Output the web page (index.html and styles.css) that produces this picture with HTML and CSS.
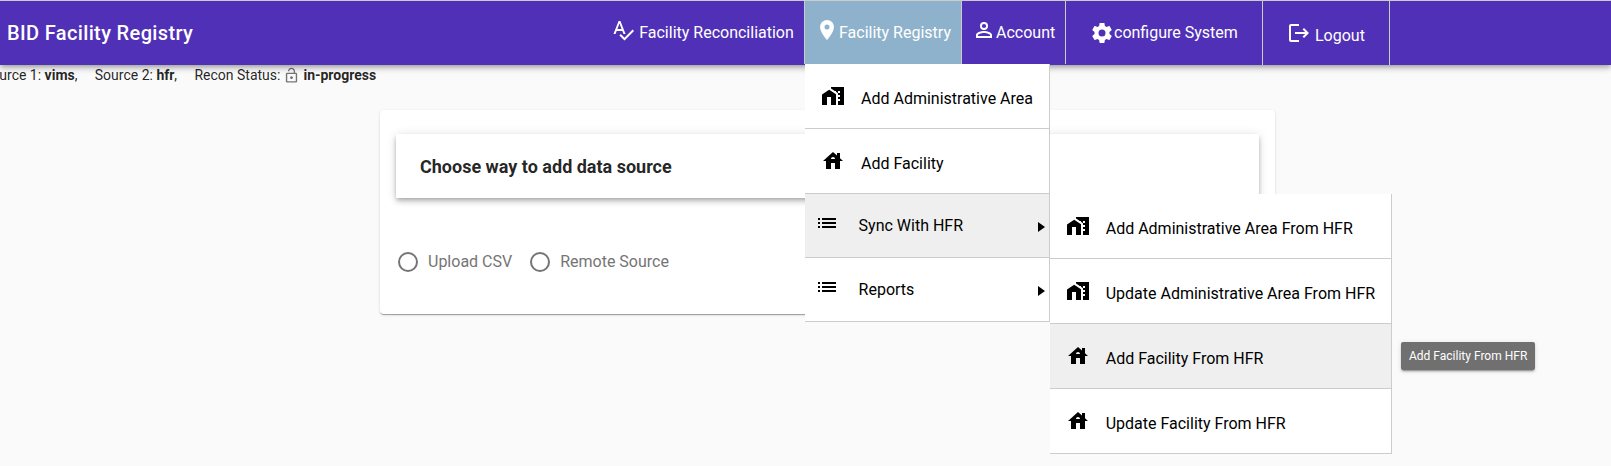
FILE: index.html
```html
<!DOCTYPE html>
<html lang="en">
<head>
<meta charset="utf-8">
<title>BID Facility Registry</title>
<link rel="stylesheet" href="styles.css">
</head>
<body>
<svg class="defs" aria-hidden="true">
  <symbol id="spellcheck" viewBox="0 0 24 24"><path d="M21.59,11.59L13.5,19.68L9.83,16L8.42,17.41L13.5,22.5L23,13M6.43,11L8.5,5.5L10.57,11M12.45,16H14.54L9.43,3H7.57L2.46,16H4.55L5.67,13H11.31L12.45,16Z"/></symbol>
  <symbol id="marker" viewBox="0 0 24 24"><path d="M12,11.5A2.5,2.5 0 0,1 9.5,9A2.5,2.5 0 0,1 12,6.5A2.5,2.5 0 0,1 14.5,9A2.5,2.5 0 0,1 12,11.5M12,2A7,7 0 0,0 5,9C5,14.25 12,22 12,22C12,22 19,14.25 19,9A7,7 0 0,0 12,2Z"/></symbol>
  <symbol id="account" viewBox="0 0 24 24"><path d="M12,4A4,4 0 0,1 16,8A4,4 0 0,1 12,12A4,4 0 0,1 8,8A4,4 0 0,1 12,4M12,5.9A2.1,2.1 0 0,0 9.9,8A2.1,2.1 0 0,0 12,10.1A2.1,2.1 0 0,0 14.1,8A2.1,2.1 0 0,0 12,5.9M12,13C14.67,13 20,14.33 20,17V20H4V17C4,14.33 9.33,13 12,13M12,14.9C9.03,14.9 5.9,16.36 5.9,17V18.1H18.1V17C18.1,16.36 14.97,14.9 12,14.9Z"/></symbol>
  <symbol id="cog" viewBox="0 0 24 24"><path d="M12,15.5A3.5,3.5 0 0,1 8.5,12A3.5,3.5 0 0,1 12,8.5A3.5,3.5 0 0,1 15.5,12A3.5,3.5 0 0,1 12,15.5M19.43,12.97C19.47,12.65 19.5,12.33 19.5,12C19.5,11.67 19.47,11.34 19.43,11L21.54,9.37C21.73,9.22 21.78,8.95 21.66,8.73L19.66,5.27C19.54,5.05 19.27,4.96 19.05,5.05L16.56,6.05C16.04,5.66 15.5,5.32 14.87,5.07L14.5,2.42C14.46,2.18 14.25,2 14,2H10C9.75,2 9.54,2.18 9.5,2.42L9.13,5.07C8.5,5.32 7.96,5.66 7.44,6.05L4.95,5.05C4.73,4.96 4.46,5.05 4.34,5.27L2.34,8.73C2.21,8.95 2.27,9.22 2.46,9.37L4.57,11C4.53,11.34 4.5,11.67 4.5,12C4.5,12.33 4.53,12.65 4.57,12.97L2.46,14.63C2.27,14.78 2.21,15.05 2.34,15.27L4.34,18.73C4.46,18.95 4.73,19.03 4.95,18.95L7.44,17.94C7.96,18.34 8.5,18.68 9.13,18.93L9.5,21.58C9.54,21.82 9.75,22 10,22H14C14.25,22 14.46,21.82 14.5,21.58L14.87,18.93C15.5,18.67 16.04,18.34 16.56,17.94L19.05,18.95C19.27,19.03 19.54,18.95 19.66,18.73L21.66,15.27C21.78,15.05 21.73,14.78 21.54,14.63L19.43,12.97Z"/></symbol>
  <symbol id="logout" viewBox="0 0 24 24"><path d="M17 7L15.59 8.41 18.17 11H8V13H18.17L15.59 15.58 17 17L22 12M4 5H12V3H4C2.9 3 2 3.9 2 5V19C2 20.1 2.9 21 4 21H12V19H4V5Z"/></symbol>
  <symbol id="area" viewBox="0 0 24 24"><path d="M8.17 5.7L1 10.48V21h5v-8h4v8h5V10.25z"/><path d="M10 3v1.51l2 1.33L13.73 7H15v.85l2 1.34V11h2v2h-2v2h2v2h-2v4h6V3H10zm9 6h-2V7h2v2z"/></symbol>
  <symbol id="house" viewBox="0 0 24 24"><path d="M19 9.3V4h-3v2.6L12 3 2 12h3v8h5v-6h4v6h5v-8h3l-3-2.7zm-9 .7c0-1.1.9-2 2-2s2 .9 2 2h-4z"/></symbol>
  <symbol id="list" viewBox="0 0 24 24"><path d="M3 13h2v-2H3v2zm0 4h2v-2H3v2zm0-8h2V7H3v2zm4 4h14v-2H7v2zm0 4h14v-2H7v2zM7 7v2h14V7H7z"/></symbol>
  <symbol id="lock" viewBox="0 0 24 24"><path d="M12 17c1.1 0 2-.9 2-2s-.9-2-2-2-2 .9-2 2 .9 2 2 2zm6-9h-1V6c0-2.76-2.240-5-5-5S7 3.240 7 6h1.900c0-1.710 1.390-3.100 3.100-3.100s3.100 1.390 3.100 3.100v2H6c-1.100 0-2 .9-2 2v10c0 1.100.9 2 2 2h12c1.100 0 2-.9 2-2V10c0-1.100-.9-2-2-2zm0 12H6V10h12v10z"/></symbol>
</svg>

<header class="toolbar">
  <h1 class="brand">BID Facility Registry</h1>
  <nav class="nav">
    <a class="nav-item reconciliation"><svg class="icon"><use href="#spellcheck"/></svg><span>Facility Reconciliation</span></a>
    <div class="nav-item registry">
      <svg class="icon"><use href="#marker"/></svg><span>Facility Registry</span>
      <div class="menu">
        <a class="menu-item"><svg class="icon"><use href="#area"/></svg><span>Add Administrative Area</span></a>
        <a class="menu-item"><svg class="icon"><use href="#house"/></svg><span>Add Facility</span></a>
        <div class="menu-item parent hovered">
          <svg class="icon"><use href="#list"/></svg><span>Sync With HFR</span><i class="arrow"></i>
          <div class="submenu">
            <a class="menu-item"><svg class="icon"><use href="#area"/></svg><span>Add Administrative Area From HFR</span></a>
            <a class="menu-item"><svg class="icon"><use href="#area"/></svg><span>Update Administrative Area From HFR</span></a>
            <a class="menu-item hovered"><svg class="icon"><use href="#house"/></svg><span>Add Facility From HFR</span><b class="tooltip">Add Facility From HFR</b></a>
            <a class="menu-item"><svg class="icon"><use href="#house"/></svg><span>Update Facility From HFR</span></a>
          </div>
        </div>
        <div class="menu-item parent"><svg class="icon"><use href="#list"/></svg><span>Reports</span><i class="arrow"></i></div>
      </div>
    </div>
    <a class="nav-item account"><svg class="icon"><use href="#account"/></svg><span>Account</span></a>
    <a class="nav-item configure"><svg class="icon"><use href="#cog"/></svg><span>configure System</span></a>
    <a class="nav-item logout"><svg class="icon"><use href="#logout"/></svg><span>Logout</span></a>
  </nav>
</header>

<div class="status">
  <span>Source 1: <b>vims</b>,</span>
  <span>Source 2: <b>hfr</b>,</span>
  <span class="recon">Recon Status: <svg class="lock"><use href="#lock"/></svg> <b>in-progress</b></span>
</div>

<main class="card">
  <h2 class="card-title">Choose way to add data source</h2>
  <div class="radios">
    <label class="radio"><i class="circle"></i>Upload CSV</label>
    <label class="radio"><i class="circle"></i>Remote Source</label>
  </div>
</main>
</body>
</html>
```
FILE: styles.css
```css
* { box-sizing: border-box; }

body {
  margin: 0;
  height: 466px;
  overflow: hidden;
  background: #fafafa;
  color: rgba(0, 0, 0, .87);
  font: 16px/24px Roboto, sans-serif;
}

.defs { display: none; }
.icon { flex: none; width: 24px; height: 24px; fill: currentColor; }

/* Toolbar */
.toolbar {
  position: relative;
  z-index: 2;
  display: flex;
  height: 65px;
  border-top: 1px solid #ccc;
  background: #5030b6;
  color: #fff;
  box-shadow: 0 2px 4px -1px rgba(0, 0, 0, .2), 0 4px 5px rgba(0, 0, 0, .14), 0 1px 10px rgba(0, 0, 0, .12);
}
.brand {
  width: 598px;
  margin: 0;
  padding: 16px 0 0 7px;
  font-size: 20px;
  font-weight: 500;
  line-height: 32px;
  letter-spacing: .36px;
}
.nav { display: flex; align-items: flex-start; }
.nav-item {
  position: relative;
  display: flex;
  height: 63px;
  border-right: 1px solid #ccc;
  padding-top: 17px;
  white-space: nowrap;
}
.nav-item > span { padding-top: 3px; }
.reconciliation { width: 207px; padding-left: 13.4px; }
.reconciliation > span { padding-left: 3.8px; }
.registry { width: 157px; padding-left: 10px; background: #8eb2cb; }
.account { width: 104px; padding-left: 10px; }
.configure { width: 197px; height: 64px; padding: 20px 0 0 24px; }
.configure > span { padding-top: 0; }
.logout { width: 127px; height: 64px; padding: 20px 0 0 24px; }
.logout > span { padding-left: 4px; }

/* Dropdown menus */
.menu, .submenu {
  position: absolute;
  border-right: 1px solid #ccc;
  background: #fff;
  color: #000;
}
.menu { top: 63px; left: 0; width: 245px; }
.submenu { top: 0; left: 245px; width: 342px; }
.menu-item {
  position: relative;
  display: flex;
  height: 65px;
  padding: 20px 0 0 16px;
  border-bottom: 1px solid #ccc;
  background: #fff;
}
.menu-item > span { padding: 3px 0 0 16px; }
.parent { height: 64px; padding: 17px 0 0 10px; }
.parent > span { padding-left: 19.6px; }
.submenu .menu-item > span { padding-left: 15.7px; }
.hovered { background: #efefef; }
.arrow {
  height: 0;
  margin: 11px 4px 0 auto;
  border: solid transparent;
  border-width: 5px 0 5px 7.5px;
  border-left-color: #000;
}
.tooltip {
  position: absolute;
  top: 18px;
  left: 351px;
  height: 28px;
  padding: 5px 8px;
  border-radius: 2px;
  background: #707070;
  color: #fff;
  font-size: 12px;
  font-weight: 400;
  line-height: 18px;
  box-shadow: 0 3px 1px -2px rgba(0, 0, 0, .2), 0 2px 2px rgba(0, 0, 0, .14), 0 1px 5px rgba(0, 0, 0, .12);
}

/* Reconciliation status line */
.status {
  display: flex;
  gap: 17.3px;
  height: 45px;
  margin-left: -17px;
  font-size: 14px;
  line-height: 20px;
}
.recon { display: flex; gap: 3px; }
.lock { width: 17px; height: 17px; margin-top: 2px; fill: #757575; }

/* Data source card */
.card {
  width: 895px;
  height: 204px;
  margin-left: 380px;
  padding: 24px 16px;
  border-radius: 4px;
  background: #fff;
  box-shadow: 0 2px 1px -1px rgba(0, 0, 0, .2), 0 1px 1px rgba(0, 0, 0, .14), 0 1px 3px rgba(0, 0, 0, .12);
}
.card-title {
  height: 64px;
  margin: 0;
  padding-left: 24px;
  background: #fff;
  font-size: 18px;
  font-weight: 700;
  line-height: 66px;
  box-shadow: 0 2px 4px -1px rgba(0, 0, 0, .2), 0 4px 5px rgba(0, 0, 0, .14), 0 1px 10px rgba(0, 0, 0, .12);
}
.radios { display: flex; gap: 18px; padding: 52px 0 0 2px; color: #757575; }
.radio { display: flex; gap: 10px; }
.circle { width: 20px; height: 20px; margin-top: 2px; border: 2px solid #757575; border-radius: 50%; }
```
